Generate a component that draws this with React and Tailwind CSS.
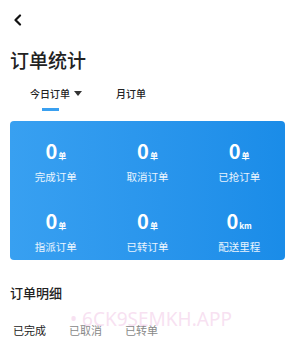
import React from "react";

const stats = [
  { value: "0", unit: "单", label: "完成订单" },
  { value: "0", unit: "单", label: "取消订单" },
  { value: "0", unit: "单", label: "已抢订单" },
  { value: "0", unit: "单", label: "指派订单" },
  { value: "0", unit: "单", label: "已转订单" },
  { value: "0", unit: "km", label: "配送里程" },
];

const font = { fontFamily: '"Noto Sans CJK SC", "Noto Sans", sans-serif' };

export default function App() {
  return (
    <div className="relative w-[295px] h-[341px] overflow-hidden bg-white text-[#222]" style={font}>
      {/* back */}
      <div className="pl-[13px] pt-[14px] h-[46px]">
        <svg width="9" height="12" viewBox="0 0 9 12" fill="none">
          <path d="M7 1.5 L2.5 6 L7 10.5" stroke="#111" strokeWidth="2.2" strokeLinecap="round" strokeLinejoin="round" />
        </svg>
      </div>

      <h1 className="pl-[10px] text-[19px] leading-[28px] font-medium text-[#222]">订单统计</h1>

      {/* tabs */}
      <div className="flex items-start pl-[30px] mt-[12px] h-[34px]">
        <div className="flex flex-col items-center">
          <div className="flex items-center text-[10px] leading-[16px] font-medium">
            今日订单
            <svg className="ml-[4px]" width="8" height="6" viewBox="0 0 8 6">
              <path d="M0 0 H8 L4 5 Z" fill="#333" />
            </svg>
          </div>
          <div className="mt-[6px] w-[17px] h-[3px] bg-[#3aa0f0] -ml-[12px]" />
        </div>
        <div className="ml-[34px] text-[10px] leading-[16px] font-medium">月订单</div>
      </div>

      {/* card */}
      <div className="mx-[10px] mt-[1px] h-[139px] rounded-[4px] bg-gradient-to-r from-[#38a0f1] to-[#1a8ce8] grid grid-cols-3 auto-rows-[48px] gap-y-[22px] pt-[18px] text-white">
        {stats.map((s) => (
          <div key={s.label} className="flex flex-col items-center">
            <div className="flex items-baseline leading-[24px]">
              <span className="text-[20px] font-bold">{s.value}</span>
              <span className="text-[8px] font-bold ml-[1px]">{s.unit}</span>
            </div>
            <div className="text-[10.5px] leading-[16px] text-white/90 mt-[1px]">{s.label}</div>
          </div>
        ))}
      </div>

      <h2 className="pl-[10px] mt-[24px] text-[13px] leading-[18px] font-medium text-[#222]">订单明细</h2>

      <div className="flex pl-[13px] mt-[20px] gap-[23px] text-[11px] leading-[16px]">
        <span className="text-[#222]">已完成</span>
        <span className="text-[#888]">已取消</span>
        <span className="text-[#888]">已转单</span>
      </div>

      {/* watermark */}
      <div className="absolute left-[70px] top-[307px] text-[19px] leading-[24px] text-[#f6d9ee]/80 pointer-events-none" style={{ fontFamily: '"Noto Sans", sans-serif' }}>
        • 6CK9SEMKH.APP
      </div>
    </div>
  );
}
